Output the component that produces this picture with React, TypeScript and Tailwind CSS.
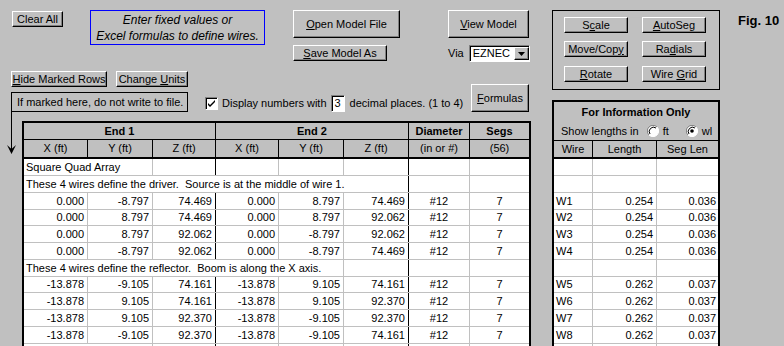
import type { ReactNode } from "react";

type DataRow =
  | { kind: "text"; text: string; span: 2 | 5 | 6 }
  | { kind: "data"; v: string[] };

type InfoRow = [string, string, string] | null;

const W = [
  "w-[64px]",
  "w-[65px]",
  "w-[63px]",
  "w-[63px]",
  "w-[65px]",
  "w-[65px]",
  "w-[61px]",
  "w-[59px]",
];

const SPAN_W: Record<number, string> = {
  2: "w-[129px]",
  5: "w-[320px]",
  6: "w-[385px]",
};

const HEIGHTS = [17, 17, 17, 16, 17, 17, 17, 16, 17, 17, 17, 16];

const rows: DataRow[] = [
  { kind: "text", text: "Square Quad Array", span: 2 },
  {
    kind: "text",
    text: "These 4 wires define the driver.  Source is at the middle of wire 1.",
    span: 6,
  },
  { kind: "data", v: ["0.000", "-8.797", "74.469", "0.000", "8.797", "74.469", "#12", "7"] },
  { kind: "data", v: ["0.000", "8.797", "74.469", "0.000", "8.797", "92.062", "#12", "7"] },
  { kind: "data", v: ["0.000", "8.797", "92.062", "0.000", "-8.797", "92.062", "#12", "7"] },
  { kind: "data", v: ["0.000", "-8.797", "92.062", "0.000", "-8.797", "74.469", "#12", "7"] },
  {
    kind: "text",
    text: "These 4 wires define the reflector.  Boom is along the X axis.",
    span: 5,
  },
  { kind: "data", v: ["-13.878", "-9.105", "74.161", "-13.878", "9.105", "74.161", "#12", "7"] },
  { kind: "data", v: ["-13.878", "9.105", "74.161", "-13.878", "9.105", "92.370", "#12", "7"] },
  { kind: "data", v: ["-13.878", "9.105", "92.370", "-13.878", "-9.105", "92.370", "#12", "7"] },
  { kind: "data", v: ["-13.878", "-9.105", "92.370", "-13.878", "-9.105", "74.161", "#12", "7"] },
  { kind: "text", text: "", span: 2 },
];

const info: InfoRow[] = [
  null,
  null,
  ["W1", "0.254", "0.036"],
  ["W2", "0.254", "0.036"],
  ["W3", "0.254", "0.036"],
  ["W4", "0.254", "0.036"],
  null,
  ["W5", "0.262", "0.037"],
  ["W6", "0.262", "0.037"],
  ["W7", "0.262", "0.037"],
  ["W8", "0.262", "0.037"],
  null,
];

const raised =
  "flex items-center justify-center bg-[#c0c0c0] border border-t-white border-l-white border-b-black border-r-black shadow-[inset_-1px_-1px_0_#808080]";

const sunken =
  "bg-white border border-t-[#808080] border-l-[#808080] border-b-white border-r-white shadow-[inset_1px_1px_0_#000]";

function Btn({ className, children }: { className: string; children: ReactNode }) {
  return <div className={`${raised} ${className}`}>{children}</div>;
}

function U({ children }: { children: ReactNode }) {
  return <span className="underline underline-offset-1">{children}</span>;
}

function Radio({ checked }: { checked?: boolean }) {
  return (
    <svg width="12" height="12" viewBox="0 0 12 12" className="shrink-0">
      <circle cx="6" cy="6" r="5.5" fill="white" />
      <path d="M10 2 A5.5 5.5 0 0 0 2 10" fill="none" stroke="#808080" strokeWidth="1" />
      <path d="M9 3 A4.3 4.3 0 0 0 3 9" fill="none" stroke="#000" strokeWidth="1" />
      <path d="M2 10 A5.5 5.5 0 0 0 10 2" fill="none" stroke="#fff" strokeWidth="1" />
      {checked ? <circle cx="6" cy="6" r="1.8" fill="#000" /> : null}
    </svg>
  );
}

function lineColor(i: number) {
  if (i === 7) return "";
  return i === 2 || i === 5 ? "border-r border-black" : "border-r border-[#c0c0c0]";
}

function MainRow({ row, h }: { row: DataRow; h: number }) {
  const hc = h === 17 ? "h-[17px]" : "h-[16px]";
  if (row.kind === "text") {
    const rest = [];
    for (let i = row.span; i < 8; i++) {
      rest.push(<div key={i} className={`${W[i]} h-full ${lineColor(i)}`} />);
    }
    return (
      <div className={`flex ${hc} bg-white border-b border-[#c0c0c0]`}>
        <div
          className={`${SPAN_W[row.span]} h-full flex items-center pl-[2px] whitespace-pre ${lineColor(row.span - 1)}`}
        >
          {row.text}
        </div>
        {rest}
      </div>
    );
  }
  return (
    <div className={`flex ${hc} bg-white border-b border-[#c0c0c0]`}>
      {row.v.map((v, i) => (
        <div
          key={i}
          className={`${W[i]} h-full flex items-center ${
            i < 6 ? "justify-end pr-[3px]" : "justify-center"
          } ${lineColor(i)}`}
        >
          {v}
        </div>
      ))}
    </div>
  );
}

function InfoLine({ row, h }: { row: InfoRow; h: number }) {
  const hc = h === 17 ? "h-[17px]" : "h-[16px]";
  return (
    <div className={`flex ${hc} bg-white border-b border-[#c0c0c0]`}>
      <div className="w-[39px] h-full flex items-center pl-[2px] border-r border-[#c0c0c0]">
        {row ? row[0] : ""}
      </div>
      <div className="w-[64px] h-full flex items-center justify-end pr-[3px] border-r border-[#c0c0c0]">
        {row ? row[1] : ""}
      </div>
      <div className="w-[61px] h-full flex items-center justify-end pr-[2px]">
        {row ? row[2] : ""}
      </div>
    </div>
  );
}

export default function App() {
  return (
    <div className="w-[784px] h-[346px] overflow-hidden bg-[#c0c0c0] flex font-['Liberation_Sans',Arial,sans-serif] text-[11px] leading-none text-black">
      {/* left side: controls and wire table */}
      <div className="w-[552px] shrink-0">
        <div className="flex items-start h-[62px] pt-[10px]">
          <Btn className="ml-[12px] mt-[1px] w-[51px] h-[16px]">Clear All</Btn>
          <div className="ml-[27px] w-[175px] h-[35px] border border-[#0000ff] flex flex-col items-center justify-center gap-[4px] italic text-[12px]">
            <span>Enter fixed values or</span>
            <span>Excel formulas to define wires.</span>
          </div>
          <div className="ml-[28px] flex flex-col">
            <Btn className="w-[107px] h-[28px]">
              <span>
                <U>O</U>pen Model File
              </span>
            </Btn>
            <Btn className="mt-[7px] w-[94px] h-[16px]">
              <span>
                <U>S</U>ave Model As
              </span>
            </Btn>
          </div>
          <div className="ml-[48px] w-[82px] flex flex-col">
            <Btn className="w-[81px] h-[28px]">
              <span>
                <U>V</U>iew Model
              </span>
            </Btn>
            <div className="mt-[7px] flex items-center justify-end">
              <span>Via</span>
              <div className={`ml-[5px] w-[62px] h-[17px] flex ${sunken}`}>
                <div className="flex-1 flex items-center pl-[3px]">EZNEC</div>
                <div className={`${raised} w-[15px] h-[13px] mt-[1px]`}>
                  <svg width="7" height="4" viewBox="0 0 7 4">
                    <path d="M0 0h7L3.5 4z" fill="#000" />
                  </svg>
                </div>
              </div>
            </div>
          </div>
        </div>

        <div className="flex h-[50px] pt-[9px] pl-[11px] pr-[23px]">
          <div className="flex flex-col">
            <div className="flex">
              <Btn className="w-[96px] h-[16px]">
                <span>
                  <U>H</U>ide Marked Rows
                </span>
              </Btn>
              <Btn className="ml-[9px] w-[72px] h-[16px]">
                <span>
                  Change <U>U</U>nits
                </span>
              </Btn>
            </div>
            <div className="mt-[5px] w-[177px] h-[20px] border border-black flex items-center pl-[5px]">
              If marked here, do not write to file.
            </div>
          </div>
          <div className="ml-[17px] mt-[24px] h-[17px] flex items-center">
            <div className={`w-[13px] h-[13px] ${sunken} flex items-center justify-center`}>
              <svg width="9" height="9" viewBox="0 0 9 9">
                <path d="M1 4l2 2 5-5v2L3 8 1 6z" fill="#000" />
              </svg>
            </div>
            <span className="ml-[4px]">Display numbers with</span>
            <div className={`ml-[4px] w-[14px] h-[17px] ${sunken} flex items-center justify-center`}>
              3
            </div>
            <span className="ml-[5px]">decimal places. (1 to 4)</span>
          </div>
          <Btn className="ml-auto mt-[13px] w-[58px] h-[28px]">
            <span>
              <U>F</U>ormulas
            </span>
          </Btn>
        </div>

        <div className="flex items-start">
          <svg width="22" height="45" viewBox="0 0 22 45" className="shrink-0 -mt-[1px]">
            <path d="M11.5 0V38" stroke="#000" strokeWidth="1" />
            <path d="M7 34L11.5 43L16 34L11.5 38Z" fill="#000" />
          </svg>
          <div className="mt-[9px] w-[509px] border-x-2 border-t-2 border-black">
            <div className="flex h-[17px] border-b border-black font-bold">
              <div className="w-[192px] flex items-center justify-center border-r border-black">End 1</div>
              <div className="w-[193px] flex items-center justify-center border-r border-black">End 2</div>
              <div className="w-[61px] flex items-center justify-center border-r border-black">Diameter</div>
              <div className="w-[59px] flex items-center justify-center">Segs</div>
            </div>
            <div className="flex h-[19px] border-b-2 border-black">
              {["X (ft)", "Y (ft)", "Z (ft)", "X (ft)", "Y (ft)", "Z (ft)", "(in or #)", "(56)"].map(
                (t, i) => (
                  <div
                    key={i}
                    className={`${W[i]} flex items-center justify-center ${i < 7 ? "border-r border-black" : ""}`}
                  >
                    {t}
                  </div>
                ),
              )}
            </div>
            {rows.map((r, i) => (
              <MainRow key={i} row={r} h={HEIGHTS[i]} />
            ))}
          </div>
        </div>
      </div>

      {/* right side: edit tools and info panel */}
      <div className="flex-1 pt-[10px]">
        <div className="flex items-start">
          <div className="w-[168px] h-[80px] border border-black pl-[11px] pt-[6px] flex flex-col">
            <div className="flex gap-[14px]">
              <Btn className="w-[64px] h-[16px]">
                <span>
                  S<U>c</U>ale
                </span>
              </Btn>
              <Btn className="w-[64px] h-[16px]">
                <span>
                  <U>A</U>utoSeg
                </span>
              </Btn>
            </div>
            <div className="mt-[8px] flex gap-[14px]">
              <Btn className="w-[64px] h-[16px]">
                <span>
                  Move/Cop<U>y</U>
                </span>
              </Btn>
              <Btn className="w-[64px] h-[16px]">
                <span>
                  Ra<U>d</U>ials
                </span>
              </Btn>
            </div>
            <div className="mt-[9px] flex gap-[14px]">
              <Btn className="w-[64px] h-[16px]">
                <span>
                  <U>R</U>otate
                </span>
              </Btn>
              <Btn className="w-[64px] h-[16px]">
                <span>
                  Wire <U>G</U>rid
                </span>
              </Btn>
            </div>
          </div>
          <div className="ml-[18px] mt-[4px] text-[13px] font-bold">Fig. 10</div>
        </div>

        <div className="mt-[10px] w-[168px] border-x-2 border-t-2 border-black">
          <div className="h-[20px] flex items-center justify-center font-bold">For Information Only</div>
          <div className="h-[19px] flex items-center pl-[7px] border-b border-black">
            <span>Show lengths in</span>
            <span className="ml-[8px]">
              <Radio />
            </span>
            <span className="ml-[4px]">ft</span>
            <span className="ml-[17px]">
              <Radio checked />
            </span>
            <span className="ml-[4px]">wl</span>
          </div>
          <div className="flex h-[18px] border-b-2 border-black">
            <div className="w-[39px] flex items-center justify-center border-r border-black">Wire</div>
            <div className="w-[64px] flex items-center justify-center border-r border-black">Length</div>
            <div className="w-[61px] flex items-center justify-center">Seg Len</div>
          </div>
          {info.map((r, i) => (
            <InfoLine key={i} row={r} h={HEIGHTS[i]} />
          ))}
        </div>
      </div>
    </div>
  );
}
